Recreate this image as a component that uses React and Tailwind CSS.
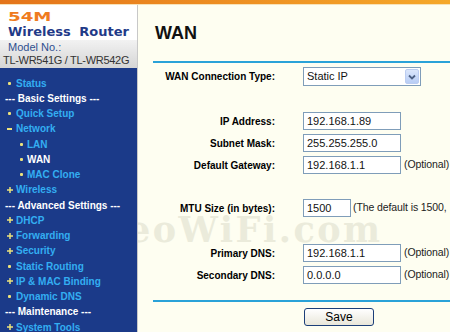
import React from "react";

const nav = [
  { t: "Status", k: "dot" },
  { t: "--- Basic Settings ---", k: "head" },
  { t: "Quick Setup", k: "dot" },
  { t: "Network", k: "minus" },
  { t: "LAN", k: "sub" },
  { t: "WAN", k: "sub", active: true },
  { t: "MAC Clone", k: "sub" },
  { t: "Wireless", k: "plus" },
  { t: "--- Advanced Settings ---", k: "head" },
  { t: "DHCP", k: "plus" },
  { t: "Forwarding", k: "plus" },
  { t: "Security", k: "plus" },
  { t: "Static Routing", k: "dot" },
  { t: "IP & MAC Binding", k: "plus" },
  { t: "Dynamic DNS", k: "dot" },
  { t: "--- Maintenance ---", k: "head" },
  { t: "System Tools", k: "plus" },
];

function Icon({ k }) {
  if (k === "dot" || k === "sub")
    return <span className="block w-[3px] h-[3px] rounded-[1px] bg-[#ece27c]" />;
  if (k === "minus") return <span className="block w-[5px] h-[2px] bg-[#ece27c]" />;
  return (
    <svg width="6" height="6" viewBox="0 0 6 6" className="block">
      <rect x="0" y="2.25" width="6" height="1.5" fill="#ece27c" />
      <rect x="2.25" y="0" width="1.5" height="6" fill="#ece27c" />
    </svg>
  );
}

function NavItem({ item }) {
  if (item.k === "head")
    return (
      <div className="h-[15.25px] leading-[15.25px] pl-[5px] text-white whitespace-nowrap">
        {item.t}
      </div>
    );
  const sub = item.k === "sub";
  return (
    <div className="h-[15.25px] flex items-center whitespace-nowrap">
      <div
        className={
          sub
            ? "w-[27px] pl-[20px] flex items-center shrink-0"
            : item.k === "dot"
            ? "w-[16px] pl-[8px] flex items-center shrink-0"
            : "w-[16px] pl-[7px] flex items-center shrink-0"
        }
      >
        <Icon k={item.k} />
      </div>
      <span className={item.active ? "text-white leading-[15.25px]" : "text-[#33aef2] leading-[15.25px]"}>
        {item.t}
      </span>
    </div>
  );
}

function Row({ label, className, children }) {
  return (
    <div className={"flex items-center " + className}>
      <div className="w-[122px] shrink-0 text-right font-bold text-[10px] text-black whitespace-nowrap">
        {label}
      </div>
      <div className="ml-[28px] flex items-center whitespace-nowrap">{children}</div>
    </div>
  );
}

function Box({ value, w = "w-[98px]" }) {
  return (
    <div
      className={
        w +
        " h-[18px] border border-[#7f9db9] bg-white pl-[3px] text-[11px] leading-[16px] text-[#111]"
      }
    >
      {value}
    </div>
  );
}

function Note({ children, ml = "ml-[3px]" }) {
  return <span className={ml + " text-[10.5px] text-[#222] tracking-[-0.1px]"}>{children}</span>;
}

export default function App() {
  return (
    <div className="w-[450px] h-[332px] overflow-hidden bg-[#fefef1] relative flex flex-col font-['Liberation_Sans',Arial,sans-serif]">
      <div className="h-[4px] shrink-0 bg-gradient-to-r from-[#e4741a] to-[#f5a82a]" />
      <div className="h-[1px] shrink-0 bg-[#f7e2b8]" />

      <div className="absolute left-[128px] top-[212px] text-[35px] leading-[35px] font-bold font-['DejaVu_Serif',serif] text-[#ebebdb] tracking-[2.5px] whitespace-nowrap z-0">
        eoWiFi.com
      </div>

      <div className="flex flex-1 min-h-0">
        <aside className="w-[138px] shrink-0 border-r border-[#c8c8c8] flex flex-col relative z-10">
          <div className="bg-white pl-[8px] pt-[3px] pb-[1px] font-['DejaVu_Sans',sans-serif] font-bold">
            <div className="h-[17px] leading-[17px] text-[13px] text-[#ef7b20]">
              <span className="inline-block origin-left scale-x-[1.4]">54M</span>
            </div>
            <div className="h-[14px] leading-[14px] text-[13px] text-[#1f3a88] whitespace-nowrap [word-spacing:4px]">
              Wireless Router
            </div>
          </div>
          <div className="bg-gradient-to-b from-[#f2f2f2] to-[#d5d5d5] pt-[1px] pb-[1px] text-[11px]">
            <div className="h-[13px] leading-[13px] pl-[8px] text-[#2f4f8f]">Model No.:</div>
            <div className="h-[13px] leading-[13px] pl-[3px] text-[#333] whitespace-nowrap tracking-[-0.3px]">
              TL-WR541G / TL-WR542G
            </div>
          </div>
          <nav className="flex-1 bg-[#1b3a89] pt-[7.5px] text-[10px] font-bold">
            {nav.map((it) => (
              <NavItem key={it.t} item={it} />
            ))}
          </nav>
        </aside>

        <main className="flex-1 min-w-0 relative z-10 pl-[15px]">
          <div className="mt-[17px] h-[22px] leading-[22px] text-[18px] font-bold text-[#111] pl-[2px]">
            WAN
          </div>
          <div className="mt-[17px] h-[2px] bg-[#2aa2d8]" />

          <Row label="WAN Connection Type:" className="mt-[4px] h-[19px]">
            <div className="w-[118px] h-[19px] border border-[#7f9db9] bg-white flex items-center">
              <span className="pl-[3px] flex-1 text-[11px] text-[#111]">Static IP</span>
              <div className="w-[14px] h-[15px] mr-[1px] rounded-[2px] bg-gradient-to-b from-[#dbe6fb] to-[#b8cdf5] border border-[#bccdf1] flex items-center justify-center">
                <svg width="8" height="6" viewBox="0 0 8 6">
                  <path d="M1 1.5 L4 4.5 L7 1.5" fill="none" stroke="#4d6185" strokeWidth="1.8" />
                </svg>
              </div>
            </div>
          </Row>

          <Row label="IP Address:" className="mt-[24px] h-[22px]">
            <Box value="192.168.1.89" />
          </Row>
          <Row label="Subnet Mask:" className="h-[22px]">
            <Box value="255.255.255.0" />
          </Row>
          <Row label="Default Gateway:" className="h-[22px]">
            <Box value="192.168.1.1" />
            <Note>(Optional)</Note>
          </Row>

          <Row label="MTU Size (in bytes):" className="mt-[21px] h-[22px]">
            <Box value="1500" w="w-[48px]" />
            <Note ml="ml-[2px]">(The default is 1500,</Note>
          </Row>

          <Row label="Primary DNS:" className="mt-[23px] h-[22px]">
            <Box value="192.168.1.1" />
            <Note>(Optional)</Note>
          </Row>
          <Row label="Secondary DNS:" className="h-[22px]">
            <Box value="0.0.0.0" />
            <Note>(Optional)</Note>
          </Row>

          <div className="mt-[14px] h-[2px] bg-[#2aa2d8]" />

          <div className="mt-[6px] pl-[151px]">
            <div className="w-[70px] h-[18px] rounded-[3px] border border-[#1c3f79] bg-gradient-to-b from-white to-[#e9e7da] text-[12px] leading-[16px] text-center text-black">
              Save
            </div>
          </div>
        </main>
      </div>
    </div>
  );
}
